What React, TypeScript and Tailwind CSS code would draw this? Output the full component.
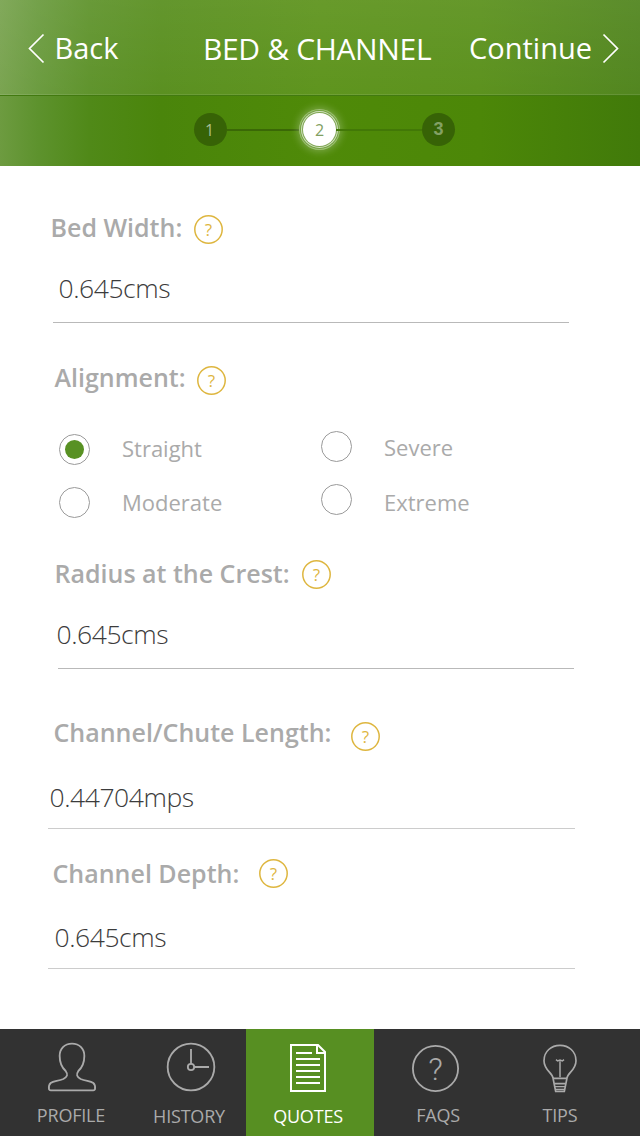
import type { ReactNode } from "react";

function Help({ className }: { className: string }) {
  return (
    <button className={`grid h-[29px] w-[29px] shrink-0 place-items-center text-[17px] leading-none text-[#deb63f] ${className}`}>
      <svg className="col-start-1 row-start-1" width="29" height="29" viewBox="0 0 29 29" fill="none" stroke="#deb63f" strokeWidth="1.5">
        <circle cx="14.5" cy="14.5" r="13.7" />
      </svg>
      <span className="col-start-1 row-start-1">?</span>
    </button>
  );
}

function Label({ className, text, children }: { className: string; text: string; children: ReactNode }) {
  return (
    <div className="flex h-10">
      <div className={`shrink-0 whitespace-nowrap text-[25px] leading-10 font-semibold text-[#aaaaaa] ${className}`}>
        {text}
      </div>
      {children}
    </div>
  );
}

function Value({ className, text }: { className: string; text: string }) {
  return (
    <div className={`h-10 whitespace-nowrap text-[26.5px] leading-10 font-light tracking-[-0.45px] text-[#3c3c3c] ${className}`}>
      {text}
    </div>
  );
}

function Radio({ className, textClass, text, checked }: { className: string; textClass: string; text: string; checked?: boolean }) {
  return (
    <div className="flex h-10 w-[262px]">
      <span
        className={`flex h-[31px] w-[31px] shrink-0 items-center justify-center rounded-full border border-[#9a9a9a] ${className}`}
      >
        {checked && <span className="h-[19px] w-[19px] rounded-full bg-[#589123]" />}
      </span>
      <span className={`text-[22px] leading-10 text-[#aaaaaa] ${textClass}`}>{text}</span>
    </div>
  );
}

function ProfileIcon() {
  return (
    <svg width="50" height="50" viewBox="141 66 150 150" fill="none" stroke="#aaaaaa" strokeWidth="5.5" strokeLinejoin="round">
      <path d="M216 71C193 71 179 87 179 108C179 128 186 143 197 153C205 164 202 170 190 177C175 184 161 182 152 189C146 194 146 201 147 208Q148 211 152 211H280Q284 211 285 208C286 201 286 194 280 189C271 182 257 184 242 177C230 170 228 164 235 153C246 143 253 128 253 108C253 87 239 71 216 71Z" />
    </svg>
  );
}

function HistoryIcon() {
  return (
    <svg width="50" height="50" viewBox="498 66 150 150" fill="none" stroke="#aaaaaa" strokeWidth="5.5">
      <circle cx="573" cy="141" r="70" />
      <circle cx="573" cy="141" r="9.5" />
      <path d="M573 87V132M582 141H627" />
    </svg>
  );
}

function QuotesIcon() {
  return (
    <svg width="36" height="48" viewBox="0 0 36 48" fill="none" stroke="#ffffff" strokeWidth="2">
      <path d="M1 1H28L35 8V47H1ZM27 1V9H35" />
      <path d="M6 9H22M6 15H30M6 21H30M6 27H30M6 33H30M6 39H30" />
    </svg>
  );
}

function TipsIcon() {
  return (
    <svg width="36" height="50" viewBox="246 69 108 150" fill="none" stroke="#aaaaaa" strokeWidth="5">
      <path d="M279 174C277 158 252 150 252 122C252 94 274 76 300 76C326 76 348 94 348 122C348 150 323 158 321 174L313 214H287L279 174Z" />
      <path d="M279 175H321M283 191H317" />
      <path d="M285 200H315M286 208H314" strokeWidth="4" />
      <path d="M300 172V124M288 119L293 123L300 120L307 123L312 119" strokeWidth="4.5" />
    </svg>
  );
}

export default function App() {
  return (
    <div className="flex h-[1136px] w-[640px] flex-col overflow-hidden bg-white font-['Open_Sans',sans-serif]">
      <header className="h-[166px] shrink-0 bg-[linear-gradient(90deg,#6d9b40_0%,#5d922d_6%,#508918_14%,#4a850b_25%,#4f8a08_50%,#4c8708_75%,#417a0a_100%)]">
        <div className="flex h-24 border-b border-[#427a10] bg-[linear-gradient(180deg,rgba(255,255,255,0.14),rgba(255,255,255,0.09))] text-white">
          <button className="flex h-[95px] w-[203px] shrink-0 border-b border-white/10 pl-7">
            <svg className="mt-[33px] shrink-0" width="17" height="31" viewBox="0 0 17 31" fill="none" stroke="white" strokeWidth="1.7">
              <path d="M15.5 1.5L1.5 15.5L15.5 29.5" />
            </svg>
            <span className="ml-[9.5px] mt-[17px] text-[29px] leading-[62px]">Back</span>
          </button>
          <h1 className="h-[95px] w-[266px] shrink-0 whitespace-nowrap border-b border-white/10 pt-[18px] text-[30px] leading-[62px] tracking-[-0.35px]">
            BED &amp; CHANNEL
          </h1>
          <button className="flex h-[95px] w-[171px] shrink-0 border-b border-white/10">
            <span className="mt-[17px] w-[133px] shrink-0 text-left text-[29px] leading-[62px]">Continue</span>
            <svg className="mt-[33px] shrink-0" width="17" height="31" viewBox="0 0 17 31" fill="none" stroke="white" strokeWidth="1.7">
              <path d="M1.5 1.5L15.5 15.5L1.5 29.5" />
            </svg>
          </button>
        </div>
        <div className="flex h-[67px] items-center pl-[194px]">
          <span className="flex h-[33px] w-[33px] items-center justify-center rounded-full bg-[#376306] pr-0.5 text-[16px] text-[#a9be92]">1</span>
          <span className="h-[2px] w-[76px] bg-[#3a6806]" />
          <span className="flex h-[33px] w-[33px] items-center justify-center rounded-full bg-white text-[16px] text-[#819f62] shadow-[0_0_0_1px_#7fa653,0_0_0_2px_#d3e2c0,0_0_0_3px_#74a340,0_0_0_4px_#9dbf75,0_0_9px_5px_rgba(255,255,255,0.3)]">2</span>
          <span className="h-[2px] w-[86px] bg-[#427807]" />
          <span className="flex h-[33px] w-[33px] items-center justify-center rounded-full bg-[#376306] font-['Liberation_Sans',sans-serif] text-[18px] font-bold text-[#84a064]">3</span>
        </div>
      </header>

      <main className="h-[863px] shrink-0 pt-[41px]">
        <Label className="ml-[50.5px] w-[143.5px]" text="Bed Width:"><Help className="mt-2" /></Label>
        <Value className="mt-[21px] ml-[58.5px]" text="0.645cms" />
        <div className="mt-[14px] ml-[53px] h-px w-[516px] bg-[#b9b9b9]" />

        <div className="mt-[34px]">
          <Label className="ml-[54.5px] w-[142.5px]" text="Alignment:"><Help className="mt-[9px]" /></Label>
        </div>
        <div className="mt-[30px] flex pl-[59px]">
          <Radio className="mt-[7px]" textClass="mt-[1px] ml-8" text="Straight" checked />
          <Radio className="mt-1" textClass="ml-8" text="Severe" />
        </div>
        <div className="mt-[14px] flex pl-[59px]">
          <Radio className="mt-[6px]" textClass="mt-[1px] ml-8" text="Moderate" />
          <Radio className="mt-[3px]" textClass="mt-[1px] ml-8" text="Extreme" />
        </div>

        <div className="mt-8">
          <Label className="ml-[54.5px] w-[247.5px]" text="Radius at the Crest:"><Help className="mt-[7px]" /></Label>
        </div>
        <Value className="mt-[21px] ml-[56.5px]" text="0.645cms" />
        <div className="mt-[14px] ml-[58px] h-px w-[516px] bg-[#b9b9b9]" />

        <div className="mt-[43px]">
          <Label className="ml-[53.5px] w-[297.5px]" text="Channel/Chute Length:"><Help className="mt-[10px]" /></Label>
        </div>
        <Value className="mt-[25px] ml-[49.5px]" text="0.44704mps" />
        <div className="mt-[11px] ml-12 h-px w-[527px] bg-[#cccccc]" />

        <div className="mt-6">
          <Label className="ml-[52.5px] w-[206.5px]" text="Channel Depth:"><Help className="mt-[6px]" /></Label>
        </div>
        <Value className="mt-[24px] ml-[54.5px]" text="0.645cms" />
        <div className="mt-[11px] ml-12 h-px w-[527px] bg-[#cccccc]" />
      </main>

      <nav className="flex h-[107px] shrink-0 bg-[#323232] text-[18px] leading-6 tracking-[-0.2px] text-[#aaaaaa]">
        <button className="flex w-[144px] shrink-0 flex-col items-center pt-[13px]">
          <ProfileIcon />
          <span className="mt-[11px] pr-0.5">PROFILE</span>
        </button>
        <button className="flex w-[102px] shrink-0 flex-col items-center pt-[13px] pr-2">
          <HistoryIcon />
          <span className="mt-3 pr-1">HISTORY</span>
        </button>
        <button className="flex w-[128px] shrink-0 flex-col items-center bg-[#578f22] pt-[15px] pr-1 text-white">
          <QuotesIcon />
          <span className="mt-3">QUOTES</span>
        </button>
        <button className="flex w-[126px] shrink-0 flex-col items-center pt-4">
          <span className="mr-[3px] grid h-[47px] w-[47px] place-items-center font-['Roboto',sans-serif] text-[32px] leading-none font-light">
            <svg className="col-start-1 row-start-1" width="47" height="47" viewBox="0 0 47 47" fill="none" stroke="#aaaaaa" strokeWidth="1.8">
              <circle cx="23.5" cy="23.5" r="22.6" />
            </svg>
            <span className="col-start-1 row-start-1">?</span>
          </span>
          <span className="mt-[11px] pl-0.5">FAQS</span>
        </button>
        <button className="flex w-[120px] shrink-0 flex-col items-center pt-[14px]">
          <TipsIcon />
          <span className="mt-[10px]">TIPS</span>
        </button>
      </nav>
    </div>
  );
}
